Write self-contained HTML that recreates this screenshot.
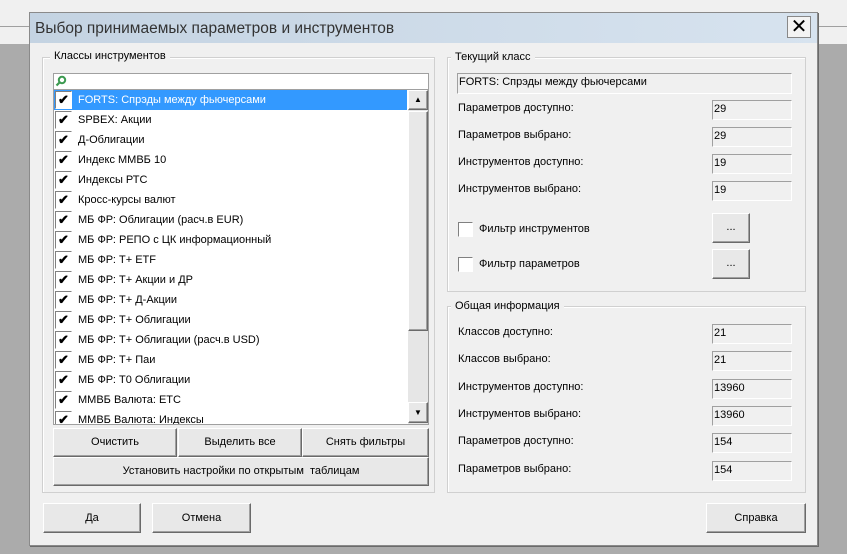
<!DOCTYPE html>
<html><head><meta charset="utf-8"><style>
*{box-sizing:border-box;margin:0;padding:0}
body{width:847px;height:554px;background:#ababab;position:relative;overflow:hidden;font-family:"Liberation Sans",sans-serif;font-size:11px;color:#000}
.a{position:absolute}
.tb{left:0;top:0;width:847px;height:27px;background:#f0f0f0;border-bottom:1px solid #a0a0a0}
.dlg{left:29px;top:12px;width:789px;height:534px;background:#f0f0f0;border:1px solid #8a8a8a;box-shadow:1px 1px 0 #6a6a6a}
.title{left:30px;top:13px;width:787px;height:30px;background:linear-gradient(90deg,#c4d3e2,#d7e3ef);font-size:15.5px;color:#333;padding:7px 0 0 5px}
.close{left:787px;top:16px;width:24px;height:22px;background:#f3f3f3;border:1px solid #888;font-size:20px;line-height:20px;text-align:center}
.gb{border:1px solid #d0d0d0;box-shadow:inset 1px 1px 0 #fff}
.gl{background:#f0f0f0;padding:0 4px}
.btn{background:#e8e8e8;border:1px solid;border-color:#fff #6a6a6a #6a6a6a #fff;box-shadow:inset -1px -1px 0 #a0a0a0;text-align:center}
.fld{border:1px solid;border-color:#a0a0a0 #fff #fff #a0a0a0;background:#f0f0f0;padding:2px 1px;font-size:11px}
.row{position:absolute;left:54px;width:354px;height:20px}
.cb{position:absolute;left:1px;top:1px;width:17px;height:18px;border:1px solid;border-color:#808080 #fff #fff #808080;background:#fff;color:#000;font-size:13px;line-height:16px;text-align:center;font-weight:bold}
.row span{position:absolute;left:24px;top:4px}
.sel{background:#3399ff;color:#fff}
.ck2{width:15px;height:15px;border:1px solid;border-color:#808080 #fff #fff #808080;background:#fff}
</style></head><body>
<div class="a tb"></div>
<div class="a" style="left:0;top:27px;width:847px;height:17px;background:#f0f0f0"></div>
<div class="a dlg"></div>
<div class="a title">Выбор принимаемых параметров и инструментов</div>
<div class="a close">✕</div>

<div class="a gb" style="left:42px;top:57px;width:393px;height:436px"></div>
<div class="a gl" style="left:50px;top:50px">Классы инструментов</div>
<div class="a" style="left:53px;top:73px;width:376px;height:352px;background:#fff;border:1px solid #a0a0a0"></div>
<svg class="a" style="left:55px;top:75px" width="12" height="12"><circle cx="7" cy="5" r="3.2" fill="none" stroke="#3c9a50" stroke-width="2"/><line x1="4.5" y1="7.5" x2="1.5" y2="10.5" stroke="#3c9a50" stroke-width="2.2"/></svg>
<div class="a" style="left:53px;top:89px;width:376px;height:1px;background:#a0a0a0"></div>
<div class="row sel" style="top:90px;width:353px"><div class="cb">✔</div><span>FORTS: Спрэды между фьючерсами</span></div>
<div class="row" style="top:110px"><div class="cb">✔</div><span>SPBEX: Акции</span></div>
<div class="row" style="top:130px"><div class="cb">✔</div><span>Д-Облигации</span></div>
<div class="row" style="top:150px"><div class="cb">✔</div><span>Индекс ММВБ 10</span></div>
<div class="row" style="top:170px"><div class="cb">✔</div><span>Индексы РТС</span></div>
<div class="row" style="top:190px"><div class="cb">✔</div><span>Кросс-курсы валют</span></div>
<div class="row" style="top:210px"><div class="cb">✔</div><span>МБ ФР: Облигации (расч.в EUR)</span></div>
<div class="row" style="top:230px"><div class="cb">✔</div><span>МБ ФР: РЕПО с ЦК информационный</span></div>
<div class="row" style="top:250px"><div class="cb">✔</div><span>МБ ФР: Т+ ETF</span></div>
<div class="row" style="top:270px"><div class="cb">✔</div><span>МБ ФР: Т+ Акции и ДР</span></div>
<div class="row" style="top:290px"><div class="cb">✔</div><span>МБ ФР: Т+ Д-Акции</span></div>
<div class="row" style="top:310px"><div class="cb">✔</div><span>МБ ФР: Т+ Облигации</span></div>
<div class="row" style="top:330px"><div class="cb">✔</div><span>МБ ФР: Т+ Облигации (расч.в USD)</span></div>
<div class="row" style="top:350px"><div class="cb">✔</div><span>МБ ФР: Т+ Паи</span></div>
<div class="row" style="top:370px"><div class="cb">✔</div><span>МБ ФР: Т0 Облигации</span></div>
<div class="row" style="top:390px"><div class="cb">✔</div><span>ММВБ Валюта: ETC</span></div>
<div class="row" style="top:410px;height:14px;overflow:hidden"><div class="cb">✔</div><span>ММВБ Валюта: Индексы</span></div>
<div class="a" style="left:408px;top:90px;width:20px;height:334px;background:#e6e6e6"></div>
<div class="a btn" style="left:408px;top:90px;width:20px;height:20px;font-size:8px;line-height:18px">▲</div>
<div class="a btn" style="left:408px;top:111px;width:20px;height:220px"></div>
<div class="a btn" style="left:408px;top:402px;width:20px;height:21px;font-size:8px;line-height:19px">▼</div>

<div class="a btn" style="left:53px;top:428px;width:124px;height:29px;line-height:27px">Очистить</div>
<div class="a btn" style="left:178px;top:428px;width:124px;height:29px;line-height:27px">Выделить все</div>
<div class="a btn" style="left:302px;top:428px;width:127px;height:29px;line-height:27px">Снять фильтры</div>
<div class="a btn" style="left:53px;top:457px;width:376px;height:29px;line-height:27px">Установить настройки по открытым&nbsp; таблицам</div>

<div class="a gb" style="left:447px;top:57px;width:359px;height:235px"></div>
<div class="a gl" style="left:451px;top:51px">Текущий класс</div>
<div class="a fld" style="left:457px;top:73px;width:335px;height:21px">FORTS: Спрэды между фьючерсами</div>
<div class="a" style="left:458px;top:102px">Параметров доступно:</div><div class="a fld" style="left:712px;top:100px;width:80px;height:20px">29</div>
<div class="a" style="left:458px;top:129px">Параметров выбрано:</div><div class="a fld" style="left:712px;top:127px;width:80px;height:20px">29</div>
<div class="a" style="left:458px;top:156px">Инструментов доступно:</div><div class="a fld" style="left:712px;top:154px;width:80px;height:20px">19</div>
<div class="a" style="left:458px;top:183px">Инструментов выбрано:</div><div class="a fld" style="left:712px;top:181px;width:80px;height:20px">19</div>
<div class="a ck2" style="left:458px;top:222px"></div><div class="a" style="left:479px;top:223px">Фильтр инструментов</div>
<div class="a btn" style="left:712px;top:213px;width:38px;height:30px;line-height:26px">...</div>
<div class="a ck2" style="left:458px;top:257px"></div><div class="a" style="left:479px;top:258px">Фильтр параметров</div>
<div class="a btn" style="left:712px;top:249px;width:38px;height:30px;line-height:26px">...</div>

<div class="a gb" style="left:447px;top:306px;width:359px;height:187px"></div>
<div class="a gl" style="left:451px;top:300px">Общая информация</div>
<div class="a" style="left:458px;top:326px">Классов доступно:</div><div class="a fld" style="left:712px;top:324px;width:80px;height:20px">21</div>
<div class="a" style="left:458px;top:353px">Классов выбрано:</div><div class="a fld" style="left:712px;top:351px;width:80px;height:20px">21</div>
<div class="a" style="left:458px;top:381px">Инструментов доступно:</div><div class="a fld" style="left:712px;top:379px;width:80px;height:20px">13960</div>
<div class="a" style="left:458px;top:408px">Инструментов выбрано:</div><div class="a fld" style="left:712px;top:406px;width:80px;height:20px">13960</div>
<div class="a" style="left:458px;top:435px">Параметров доступно:</div><div class="a fld" style="left:712px;top:433px;width:80px;height:20px">154</div>
<div class="a" style="left:458px;top:463px">Параметров выбрано:</div><div class="a fld" style="left:712px;top:461px;width:80px;height:20px">154</div>

<div class="a btn" style="left:43px;top:503px;width:98px;height:30px;line-height:28px">Да</div>
<div class="a btn" style="left:152px;top:503px;width:99px;height:30px;line-height:28px">Отмена</div>
<div class="a btn" style="left:706px;top:503px;width:100px;height:30px;line-height:28px">Справка</div>
</body></html>
